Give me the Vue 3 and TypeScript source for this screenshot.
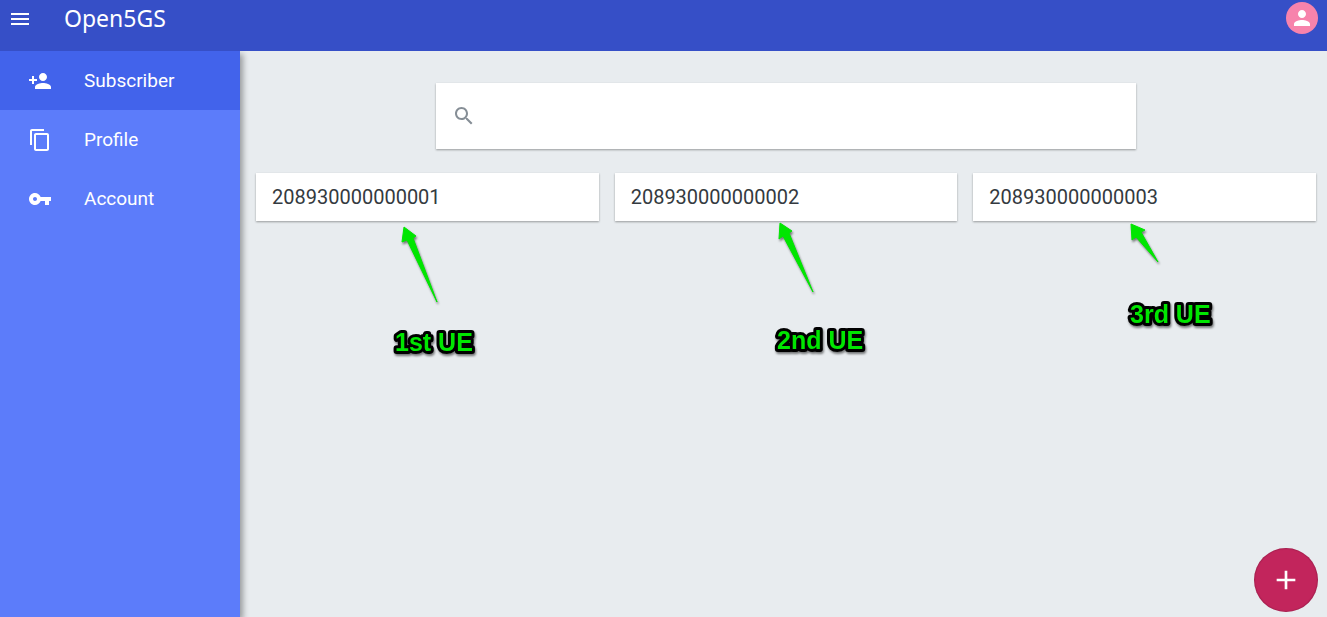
<script setup lang="ts">
import { ref } from 'vue'

interface NavItem {
  label: string
  icon: string
}

interface Subscriber {
  imsi: string
  note: string
  noteX: number
  noteY: number
  arrow: string
}

const navItems: NavItem[] = [
  {
    label: 'Subscriber',
    icon: 'M15 12c2.21 0 4-1.79 4-4s-1.79-4-4-4-4 1.79-4 4 1.79 4 4 4zm-9-2V7H4v3H1v2h3v3h2v-3h3v-2H6zm9 4c-2.67 0-8 1.34-8 4v2h16v-2c0-2.66-5.33-4-8-4z',
  },
  {
    label: 'Profile',
    icon: 'M16 1H4c-1.1 0-2 .9-2 2v14h2V3h12V1zm3 4H8c-1.1 0-2 .9-2 2v14c0 1.1.9 2 2 2h11c1.1 0 2-.9 2-2V7c0-1.1-.9-2-2-2zm0 16H8V7h11v14z',
  },
  {
    label: 'Account',
    icon: 'M12.65 10C11.83 7.67 9.61 6 7 6c-3.31 0-6 2.69-6 6s2.69 6 6 6c2.61 0 4.83-1.67 5.65-4H17v4h4v-4h2v-4H12.65zM7 14c-1.1 0-2-.9-2-2s.9-2 2-2 2 .9 2 2-.9 2-2 2z',
  },
]

// Arrow and note coordinates are relative to the card's top left corner.
const subscribers: Subscriber[] = [
  { imsi: '208930000000001', note: '1st UE', noteX: 139, noteY: 178, arrow: '148,54 160,63 157,65 181,129 151,67 146,69' },
  { imsi: '208930000000002', note: '2nd UE', noteX: 162, noteY: 176, arrow: '165,50 177,58 174,60 198,119 168,63 164,66' },
  { imsi: '208930000000003', note: '3rd UE', noteX: 157, noteY: 150, arrow: '158,51 172,57 168,59 185,89 163,64 159,67' },
]

const active = ref('Subscriber')
const query = ref('')
</script>

<template>
  <div class="app">
    <header class="topbar">
      <button class="icon-button" type="button" aria-label="Menu">
        <svg class="icon" viewBox="0 0 24 24"><path d="M3 18h18v-2H3v2zm0-5h18v-2H3v2zm0-7v2h18V6H3z" /></svg>
      </button>
      <h1 class="title">Open5GS</h1>
      <button class="avatar" type="button" aria-label="User">
        <svg class="avatar-icon" viewBox="0 0 24 24"><path d="M12 12c2.21 0 4-1.79 4-4s-1.79-4-4-4-4 1.79-4 4 1.79 4 4 4zm0 2c-2.67 0-8 1.34-8 4v2h16v-2c0-2.66-5.33-4-8-4z" /></svg>
      </button>
    </header>
    <div class="body">
      <nav class="sidebar">
        <a
          v-for="item in navItems"
          :key="item.label"
          href="#"
          class="nav-item"
          :class="{ active: active === item.label }"
          @click.prevent="active = item.label"
        >
          <svg class="icon" viewBox="0 0 24 24"><path :d="item.icon" /></svg>
          <span>{{ item.label }}</span>
        </a>
      </nav>
      <main class="content">
        <label class="search">
          <svg class="search-icon" viewBox="0 0 24 24"><path d="M15.5 14h-.79l-.28-.27C15.41 12.59 16 11.11 16 9.5 16 5.91 13.09 3 9.5 3S3 5.91 3 9.5 5.91 16 9.5 16c1.61 0 3.09-.59 4.23-1.57l.27.28v.79l5 4.99L20.49 19l-4.99-5zm-6 0C7.01 14 5 11.99 5 9.5S7.01 5 9.5 5 14 7.01 14 9.5 11.99 14 9.5 14z" /></svg>
          <input v-model="query" class="search-input" type="text" aria-label="Search" />
        </label>
        <div class="cards">
          <article v-for="s in subscribers" :key="s.imsi" class="card">
            {{ s.imsi }}
            <svg class="note" viewBox="0 0 320 200" width="320" height="200">
              <polygon class="arrow" :points="s.arrow" />
              <text class="note-text" :x="s.noteX" :y="s.noteY">{{ s.note }}</text>
            </svg>
          </article>
        </div>
      </main>
    </div>
    <button class="fab" type="button" aria-label="Add subscriber">
      <svg class="icon" viewBox="0 0 24 24"><path d="M19 13h-6v6h-2v-6H5v-2h6V5h2v6h6v2z" /></svg>
    </button>
  </div>
</template>

<style>
body {
  margin: 0;
}
</style>

<style scoped>
.app {
  display: flex;
  flex-direction: column;
  min-height: 100vh;
  background: #e8ecef;
  font-family: Roboto, 'Liberation Sans', sans-serif;
}
button {
  border: 0;
  padding: 0;
  cursor: pointer;
}
.icon {
  display: block;
  width: 24px;
  height: 24px;
  fill: #fff;
}
.topbar {
  display: flex;
  align-items: flex-start;
  box-sizing: border-box;
  height: 51px;
  padding: 2px 9px 0 8px;
  background: #364fc7;
}
.icon-button {
  margin-top: 5px;
  background: none;
}
.title {
  flex: 1;
  margin: 0 0 0 32px;
  color: #fff;
  font: 400 23px/32px 'Noto Sans', sans-serif;
}
.avatar {
  display: grid;
  place-items: center;
  width: 32px;
  height: 32px;
  border-radius: 50%;
  background: #f783ac;
}
.avatar-icon {
  width: 24px;
  height: 24px;
  fill: #fff;
}
.body {
  display: flex;
  flex: 1;
}
.sidebar {
  flex: 0 0 240px;
  background: #5c7cfa;
  box-shadow: 3px 3px 6px rgba(0, 0, 0, 0.35);
  clip-path: inset(0 -16px 0 0);
}
.nav-item {
  display: flex;
  align-items: center;
  gap: 32px;
  height: 59px;
  padding-left: 28px;
  color: #fff;
  font-size: 19px;
  text-decoration: none;
}
.nav-item.active {
  background: #4263eb;
}
.content {
  flex: 1;
  padding: 32px 11px 0 16px;
}
.search {
  display: flex;
  align-items: center;
  gap: 16px;
  box-sizing: border-box;
  max-width: 700px;
  height: 66px;
  margin: 0 auto 24px;
  padding: 0 16px;
  background: #fff;
  box-shadow: 0 1px 2px rgba(0, 0, 0, 0.35);
}
.search-icon {
  width: 24px;
  height: 24px;
  fill: #868e96;
}
.search-input {
  flex: 1;
  border: 0;
  outline: 0;
  background: none;
  color: #343a40;
  font: inherit;
  font-size: 20px;
}
.cards {
  display: grid;
  grid-template-columns: repeat(3, 1fr);
  gap: 16px;
}
.card {
  position: relative;
  padding: 0 16px;
  background: #fff;
  box-shadow: 0 1px 2px rgba(0, 0, 0, 0.35);
  color: #343a40;
  font-size: 20px;
  line-height: 48px;
}
.note {
  position: absolute;
  top: 0;
  left: 0;
  overflow: visible;
  pointer-events: none;
}
.arrow {
  fill: #00e600;
  stroke: #00e600;
  stroke-width: 1px;
  stroke-linejoin: round;
  filter: drop-shadow(1px 2px 1px rgba(0, 0, 0, 0.5));
}
.note-text {
  fill: #00e600;
  stroke: #000;
  stroke-width: 6px;
  stroke-linejoin: round;
  paint-order: stroke;
  font: 700 25px/1 'Liberation Sans', Arial, sans-serif;
  filter: drop-shadow(1px 2px 1px rgba(0, 0, 0, 0.5));
}
.fab {
  position: fixed;
  right: 9px;
  bottom: 5px;
  display: grid;
  place-items: center;
  width: 64px;
  height: 64px;
  border-radius: 50%;
  background: #c2255c;
  box-shadow: inset 0 0 1px 1px rgba(0, 0, 0, 0.15);
}
.fab .icon {
  width: 32px;
  height: 32px;
}
</style>
